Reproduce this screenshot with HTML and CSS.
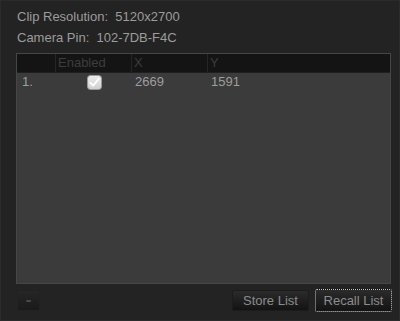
FILE: index.html
```html
<!DOCTYPE html>
<html>
<head>
<meta charset="utf-8">
<link rel="stylesheet" href="styles.css">
</head>
<body>
<div class="window">
  <div class="info-line">Clip Resolution:&nbsp; 5120x2700</div>
  <div class="info-line">Camera Pin:&nbsp; 102-7DB-F4C</div>
  <div class="panel">
    <div class="grid header">
      <div class="cell"></div>
      <div class="cell">Enabled</div>
      <div class="cell">X</div>
      <div class="cell">Y</div>
    </div>
    <div class="grid row">
      <div class="cell idx">1.</div>
      <div class="cell check-cell">
        <svg class="check" width="15" height="15" viewBox="0 0 15 15">
          <defs>
            <linearGradient id="cb" x1="0" y1="0" x2="0" y2="1">
              <stop offset="0" stop-color="#ececec"/>
              <stop offset="1" stop-color="#cfcfcf"/>
            </linearGradient>
          </defs>
          <rect x="0.5" y="0.5" width="14" height="14" rx="3" fill="url(#cb)" stroke="#9a9a9a"/>
          <path d="M3.5 7.8 L6.2 10.6 L11.8 3.8" fill="none" stroke="#ffffff" stroke-width="1.8" stroke-linecap="round" stroke-linejoin="round"/>
        </svg>
      </div>
      <div class="cell">2669</div>
      <div class="cell">1591</div>
    </div>
  </div>
  <div class="bottom">
    <button class="btn small"><span class="dash"></span></button>
    <div class="spacer"></div>
    <button class="btn">Store List</button>
    <button class="btn focused">Recall List</button>
  </div>
</div>
</body>
</html>
```
FILE: styles.css
```css
html, body {
  margin: 0;
  padding: 0;
  background: #232323;
}
.window {
  width: 400px;
  height: 321px;
  box-sizing: border-box;
  border: 1px solid #2b2b2b;
  background: #232323;
  padding: 5px 7px 8px 15px;
  display: flex;
  flex-direction: column;
  font-family: "Liberation Sans", Arial, sans-serif;
  font-size: 13px;
}
.info-line {
  height: 21px;
  line-height: 21px;
  color: #9c9c9c;
  padding-left: 1px;
}
.panel {
  margin-top: 5px;
  flex: 1;
  margin-right: 1px;
  background: #3b3b3b;
  border: 1px solid #464646;
  display: flex;
  flex-direction: column;
}
.grid {
  display: grid;
  grid-template-columns: 39px 76px 76px 1fr;
}
.header {
  height: 18px;
  background: #141414;
  border-bottom: 1px solid #1f1f1f;
  color: #3d3d3d;
  line-height: 18px;
}
.header .cell {
  border-right: 1px solid #262626;
  padding-left: 2px;
}
.header .cell:last-child {
  border-right: none;
}
.row {
  height: 18px;
  line-height: 18px;
  color: #9e9e9e;
  margin-top: 0;
}
.row .cell {
  padding-left: 3px;
}
.row .idx {
  padding-left: 5px;
}
.check-cell {
  display: flex;
  align-items: center;
}
.row .check-cell {
  padding-left: 31px;
}
.check {
  display: block;
}
.bottom {
  margin-top: 5px;
  height: 23px;
  display: flex;
  align-items: center;
  gap: 6px;
}
.spacer {
  flex: 1;
}
.btn {
  height: 21px;
  width: 77px;
  padding: 0;
  font-family: "Liberation Sans", Arial, sans-serif;
  font-size: 13px;
  color: #8c8c8c;
  background: linear-gradient(#2b2b2b, #131313);
  border: 1px solid #1c1c1c;
  border-radius: 2px;
}
.btn.small {
  width: 23px;
  margin-left: 1px;
  display: flex;
  align-items: center;
  justify-content: center;
  background: linear-gradient(#262626, #1a1a1a);
  border-color: #222;
}
.dash {
  display: block;
  width: 5px;
  height: 2px;
  border-radius: 1px;
  background: #4a4a4a;
}
.btn.focused {
  height: 23px;
  border: 1px dotted #c4c4c4;
}
```
